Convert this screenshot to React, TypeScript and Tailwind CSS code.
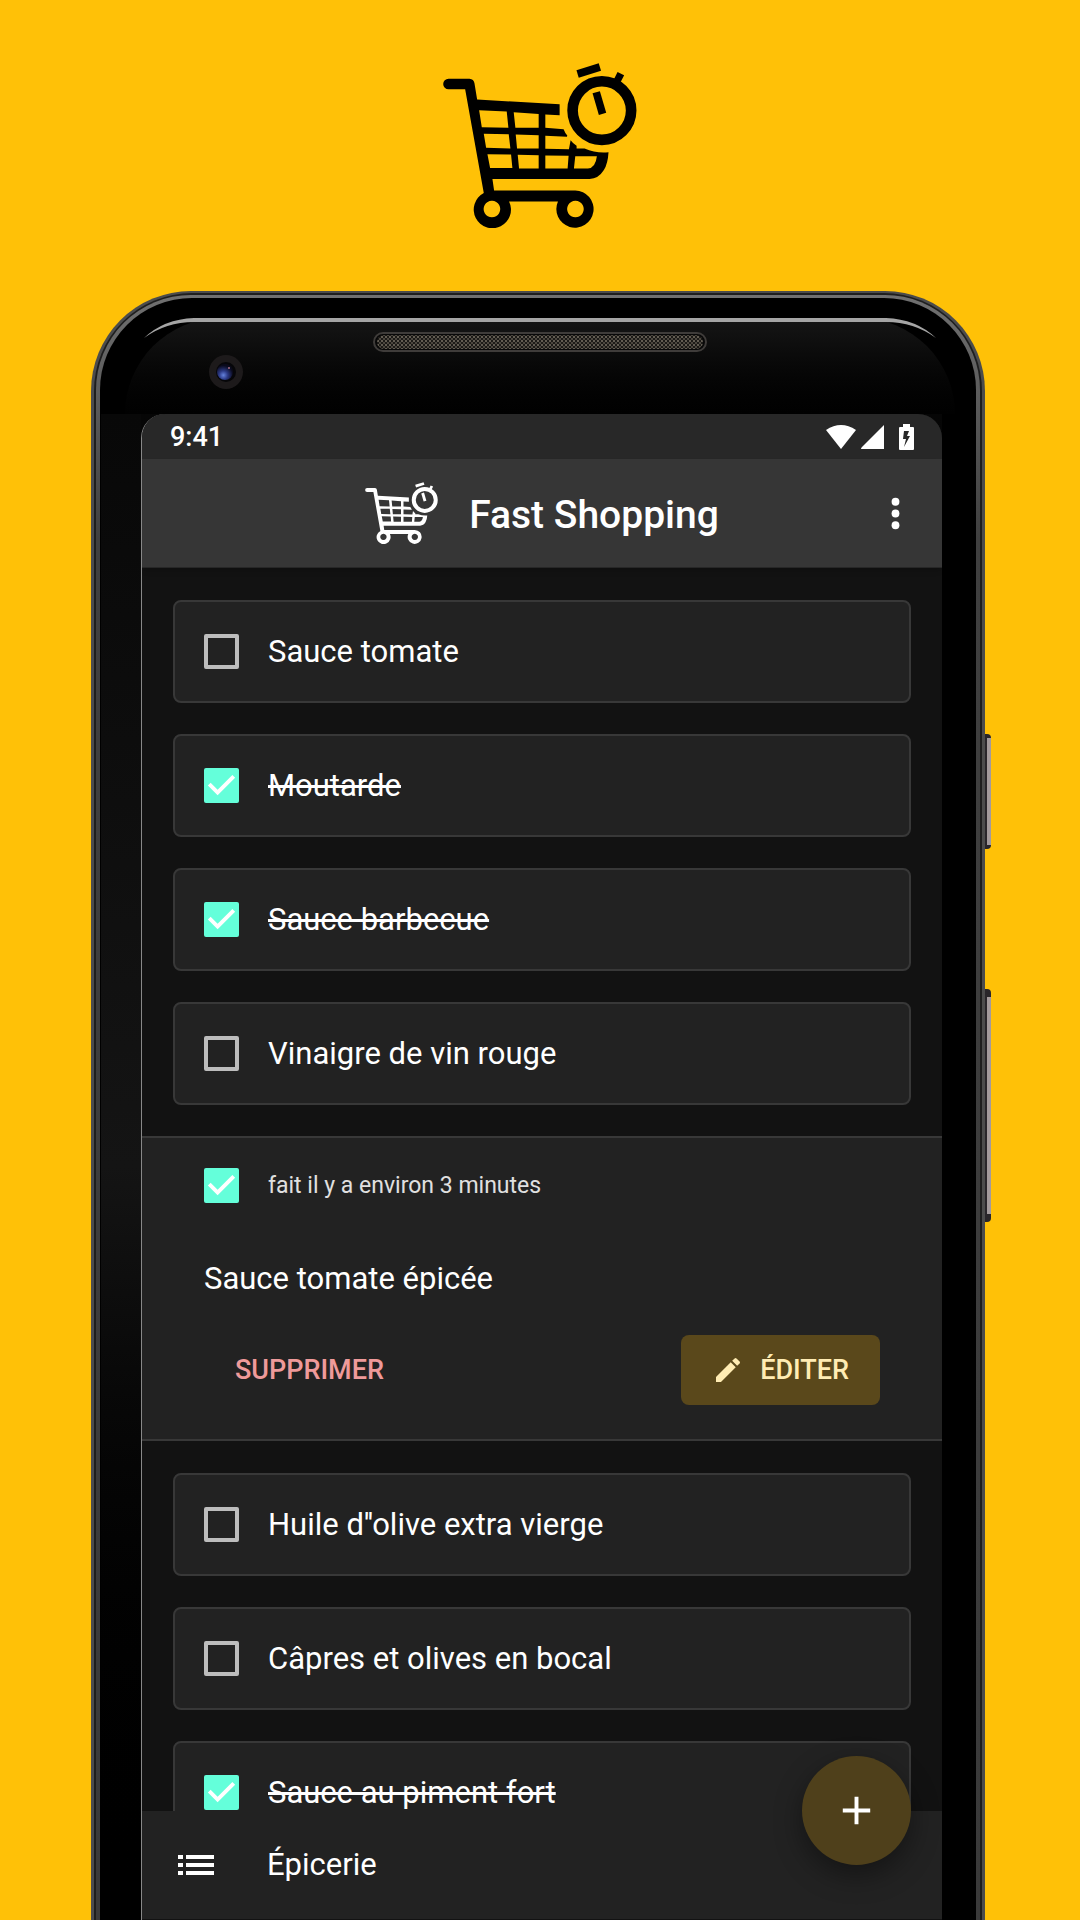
import { useState } from "react";

type Item = { label: string; done: boolean };

const firstItems: Item[] = [
  { label: "Sauce tomate", done: false },
  { label: "Moutarde", done: true },
  { label: "Sauce barbecue", done: true },
  { label: "Vinaigre de vin rouge", done: false },
];

const lastItems: Item[] = [
  { label: "Huile d''olive extra vierge", done: false },
  { label: "Câpres et olives en bocal", done: false },
  { label: "Sauce au piment fort", done: true },
];

function CartLogo({ className }: { className: string }) {
  return (
    <svg viewBox="40 38 582 496" className={className} fill="none" stroke="currentColor" aria-hidden="true">
      <path
        d="M56 85H119Q132 86 134 99L142 148L390 162V195L347 193V233L402 237Q406 248 413 256L412 260L347 257V296L418 297L423 270Q431 281 441 287V295H465Q500 310 537 306Q535 340 523 360Q507 386 480 387H188L193 421H437A56 56 0 1 1 385 454H238A56 56 0 1 1 162 429L106 117H56A16 16 0 0 1 56 85ZM148 180L156 231L236 233L231 184ZM252 186L257 233H327V191ZM162 251L169 293L242 295L237 252ZM258 253L262 295H327V255ZM173 312L181 354H248L244 313ZM264 314L268 355H327V315ZM347 316V355H414L417 317ZM437 318L433 355H475Q498 353 502 318ZM186 452A25 25 0 1 0 187 452ZM437 452A25 25 0 1 0 438 452Z"
        fill="currentColor"
        fillRule="evenodd"
        stroke="none"
      />
      <circle cx="517" cy="181" r="88" strokeWidth="32" />
      <path d="M444 71L511 50" strokeWidth="23" />
      <path d="M500 126L519 191" strokeWidth="23" />
      <path d="M574 70L560 98" strokeWidth="22" />
    </svg>
  );
}

function CheckBox({ checked, onChange }: { checked: boolean; onChange: () => void }) {
  return (
    <span className="grid size-[35px] shrink-0">
      <input
        type="checkbox"
        checked={checked}
        onChange={onChange}
        className="col-start-1 row-start-1 size-[35px] appearance-none rounded-[2px] border-4 border-[#bdbdbd] checked:border-0 checked:bg-[#64ffda]"
      />
      {checked && (
        <svg viewBox="3 3 18 18" className="pointer-events-none col-start-1 row-start-1 size-[35px] fill-white" aria-hidden="true">
          <path d="M10 17l-5-5 1.41-1.41L10 14.17l7.59-7.59L19 8l-9 9z" />
        </svg>
      )}
    </span>
  );
}

function ItemCard({ item }: { item: Item }) {
  const [done, setDone] = useState(item.done);
  return (
    <li className="shrink-0">
      <label className="flex h-[103px] items-center gap-[29px] rounded-lg border-2 border-[#383838] bg-[#222222] px-[29px]">
        <CheckBox checked={done} onChange={() => setDone(!done)} />
        <span className={done ? "text-[31px] leading-9 line-through" : "text-[31px] leading-9"}>{item.label}</span>
      </label>
    </li>
  );
}

function ItemList({ items }: { items: Item[] }) {
  return (
    <ul className="flex flex-col gap-[31px] px-[31px] pt-8 pb-[31px]">
      {items.map((item) => (
        <ItemCard key={item.label} item={item} />
      ))}
    </ul>
  );
}

function ItemDetails() {
  const [done, setDone] = useState(true);
  return (
    <section className="border-y-2 border-[#383838] bg-[#222222] px-[62px] pt-[30px] pb-[34px]">
      <label className="flex items-center gap-[29px]">
        <CheckBox checked={done} onChange={() => setDone(!done)} />
        <span className="text-[23px] leading-8 text-[#e0e0e0]">fait il y a environ 3 minutes</span>
      </label>
      <p className="mt-[58px] text-[31px] leading-9">Sauce tomate épicée</p>
      <div className="mt-[38px] flex items-center justify-between">
        <button className="h-[70px] rounded-lg px-[31px] text-[27px] font-medium text-[#ef9a9a]">SUPPRIMER</button>
        <button className="flex h-[70px] items-center gap-4 rounded-lg bg-[#5a481b] px-[31px] text-[27px] font-medium text-[#ffecb3]">
          <svg viewBox="0 0 24 24" className="size-8 fill-current" aria-hidden="true">
            <path d="M3 17.25V21h3.75L17.81 9.94l-3.75-3.75L3 17.25zM20.71 7.04c.39-.39.39-1.02 0-1.41l-2.34-2.34a.9959.9959 0 0 0-1.41 0l-1.83 1.83 3.75 3.75 1.83-1.83z" />
          </svg>
          ÉDITER
        </button>
      </div>
    </section>
  );
}

function StatusBar() {
  return (
    <div className="flex h-[45px] shrink-0 items-center justify-between bg-[#282828] px-7">
      <span className="text-[27px] leading-8 font-medium">9:41</span>
      <div className="flex items-center fill-white">
        <svg viewBox="0 0 30 24" className="h-6 w-[30px]" aria-hidden="true">
          <path d="M0 5Q15 -5 30 5L15 24Z" />
        </svg>
        <svg viewBox="0 0 24 24" className="ml-[5px] size-6" aria-hidden="true">
          <path d="M23 0V24H1Q-1 24 1 22Z" />
        </svg>
        <svg viewBox="0 0 15 26" className="ml-[14px] h-[26px] w-[15px]" aria-hidden="true">
          <path fillRule="evenodd" d="M4 0H11V3H14Q15 3 15 4V25Q15 26 14 26H1Q0 26 0 25V4Q0 3 1 3H4ZM5 7L4 15H7L5 23L11 12H8L10 7Z" />
        </svg>
      </div>
    </div>
  );
}

function Phone() {
  return (
    <div className="relative mt-[63px] mr-[95px] ml-[91px] flex min-h-0 flex-1 flex-col">
      <div className="absolute top-[443px] -right-[6px] h-[115px] w-[6px] rounded-r-sm border-y-4 border-l-2 border-[#29262a] bg-[#a39a9c]" />
      <div className="absolute top-[698px] -right-[6px] h-[233px] w-[6px] rounded-r-sm border-y-8 border-l-2 border-[#29262a] bg-[#a39a9c]" />
      <div className="flex min-h-0 flex-1 flex-col rounded-t-[100px] bg-[#4c4c4c] px-[3px] pt-[2px]">
        <div className="flex min-h-0 flex-1 flex-col rounded-t-[98px] bg-[#1e1e1e] px-[2px] pt-[2px]">
          <div className="flex min-h-0 flex-1 flex-col rounded-t-[95px] bg-linear-to-b from-[#707070] from-0% via-[#404040] via-15% to-[#3a3a3a] px-[4px] pt-[3px]">
            <div className="flex min-h-0 flex-1 flex-col rounded-t-[92px] bg-black px-[1px] pt-[2px]">
              <Bezel />
              <div className="flex min-h-0 flex-1 bg-linear-to-b from-[#060606] via-black to-black">
                <div className="w-10 shrink-0 bg-linear-to-b from-[#080808] via-[#141414] to-black" />
                <Screen />
                <div className="w-[33px] shrink-0 bg-black" />
              </div>
            </div>
          </div>
        </div>
      </div>
    </div>
  );
}

function Bezel() {
  return (
    <div className="h-[114px] shrink-0 pt-[18px] pr-5 pl-6">
      <div className="h-[96px] rounded-t-[100px] bg-linear-to-b from-[#161616] to-[#010101]">
        <div className="flex h-1 items-start px-[19px]">
          <svg viewBox="0 0 50 20" className="h-5 w-[50px] shrink-0 fill-[#a5a5a5]" aria-hidden="true">
            <path d="M0 20Q20 1 50 0V4Q22 4 0 20Z" />
          </svg>
          <div className="h-1 flex-1 bg-[#a5a5a5]" />
          <svg viewBox="0 0 50 20" className="h-5 w-[50px] shrink-0 fill-[#a5a5a5]" aria-hidden="true">
            <path d="M50 20Q30 1 0 0V4Q28 4 50 20Z" />
          </svg>
        </div>
        <svg viewBox="0 0 334 20" className="mx-auto mt-[10px] h-5 w-[334px]" aria-hidden="true">
          <defs>
            <pattern id="mesh" width="4" height="4" patternUnits="userSpaceOnUse">
              <rect width="4" height="4" fill="#1c1a17" />
              <rect width="2" height="2" fill="#625c52" />
              <rect x="2" y="2" width="2" height="2" fill="#4c473f" />
            </pattern>
          </defs>
          <rect x="1" y="1" width="332" height="18" rx="9" fill="#080808" stroke="#3f3c3a" strokeWidth="2" />
          <rect x="4" y="3" width="326" height="14" rx="7" fill="url(#mesh)" />
        </svg>
        <svg viewBox="0 0 34 34" className="mt-[3px] ml-[84px] size-[34px]" aria-hidden="true">
          <defs>
            <radialGradient id="lens" cx="0.4" cy="0.7" r="0.6">
              <stop offset="0" stopColor="#6482dc" />
              <stop offset="0.45" stopColor="#2c3a86" />
              <stop offset="1" stopColor="#0a0a1c" />
            </radialGradient>
          </defs>
          <circle cx="17" cy="17" r="17" fill="#1d1a1b" />
          <circle cx="17" cy="17" r="10" fill="#060609" />
          <circle cx="16" cy="17" r="8" fill="url(#lens)" />
          <circle cx="20" cy="13" r="1" fill="#a86f84" />
        </svg>
      </div>
    </div>
  );
}

function Screen() {
  return (
    <div className="flex min-w-0 flex-1 flex-col overflow-hidden rounded-t-3xl border-l border-[#888888] bg-[#121212] text-white">
      <StatusBar />
      <header className="z-10 grid h-[109px] shrink-0 grid-cols-[1fr_auto_1fr] items-center border-b border-[#272727] bg-[#363636] px-[23px] shadow-md">
        <div className="col-start-2 flex items-center gap-[31px]">
          <CartLogo className="h-[62px] w-[73px] text-white" />
          <h1 className="pt-1 text-[39px] leading-[48px] font-medium">Fast Shopping</h1>
        </div>
        <button aria-label="Menu" className="justify-self-end">
          <svg viewBox="0 0 24 24" className="size-[47px] fill-white" aria-hidden="true">
            <circle cx="12" cy="6" r="2" />
            <circle cx="12" cy="12" r="2" />
            <circle cx="12" cy="18" r="2" />
          </svg>
        </button>
      </header>
      <main className="min-h-0 flex-1 overflow-hidden">
        <ItemList items={firstItems} />
        <ItemDetails />
        <ItemList items={lastItems} />
      </main>
      <footer className="relative flex h-[109px] shrink-0 items-center border-b border-[#121212] bg-[#222222] px-[36px]">
        <button className="flex items-center gap-[53px] text-[31px] leading-9">
          <svg viewBox="0 0 36 20" className="h-5 w-9 fill-white" aria-hidden="true">
            <path d="M0 0H5V4H0ZM8 0H36V4H8ZM0 8H5V12H0ZM8 8H36V12H8ZM0 16H5V20H0ZM8 16H36V20H8Z" />
          </svg>
          Épicerie
        </button>
        <button
          aria-label="Ajouter"
          className="absolute -top-[55px] right-[31px] flex size-[109px] items-center justify-center rounded-full bg-[#4f401b] shadow-[0_10px_28px_rgba(0,0,0,0.4)]"
        >
          <svg viewBox="0 0 24 24" className="size-[47px] fill-white" aria-hidden="true">
            <path d="M19 13h-6v6h-2v-6H5v-2h6V5h2v6h6v2z" />
          </svg>
        </button>
      </footer>
    </div>
  );
}

export default function App() {
  return (
    <div className="flex h-screen flex-col overflow-hidden bg-[#ffc107] font-['Roboto',sans-serif]">
      <CartLogo className="mx-auto mt-[63px] h-[165px] w-[194px] shrink-0 text-black" />
      <Phone />
    </div>
  );
}
